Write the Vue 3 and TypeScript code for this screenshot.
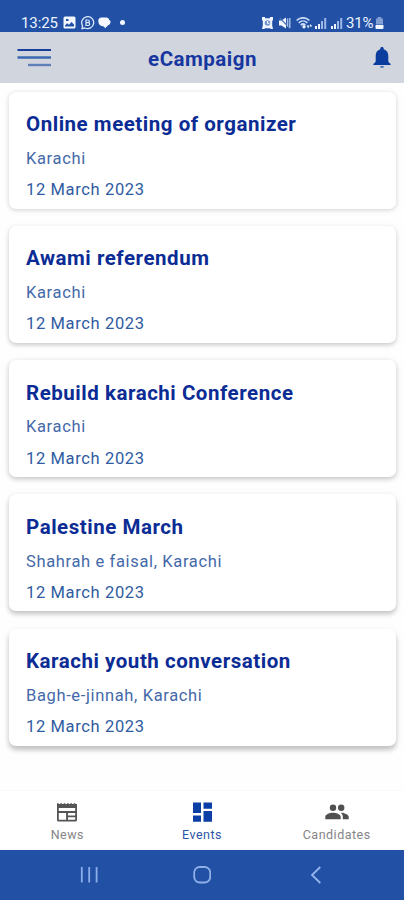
<script setup lang="ts">
interface CampaignEvent {
  title: string
  place: string
  date: string
}

const events: CampaignEvent[] = [
  { title: 'Online meeting of organizer', place: 'Karachi', date: '12 March 2023' },
  { title: 'Awami referendum', place: 'Karachi', date: '12 March 2023' },
  { title: 'Rebuild karachi Conference', place: 'Karachi', date: '12 March 2023' },
  { title: 'Palestine March', place: 'Shahrah e faisal, Karachi', date: '12 March 2023' },
  { title: 'Karachi youth conversation', place: 'Bagh-e-jinnah, Karachi', date: '12 March 2023' },
]
</script>

<template>
  <div class="screen">
    <div class="status">
      <div class="status-left">
        <span class="clock">13:25</span>
        <svg class="s-image" width="13" height="13" viewBox="0 0 13 13">
          <path fill="#f2f6ff" fill-rule="evenodd" d="M2 .5h9A1.5 1.5 0 0 1 12.500 2v9a1.500 1.500 0 0 1-1.500 1.500H2A1.500 1.500 0 0 1 .500 11V2A1.500 1.500 0 0 1 2 .500zM2 10.500h9V8.500L8.500 6 6 8.800 4.200 7.300 2 9.500zM3 3v2h2.500V3z" />
        </svg>
        <svg class="s-chat" width="15" height="14" viewBox="0 0 15 14">
          <path d="M2 12.600l.6-2.800A6 6 0 1 1 5 12z" fill="none" stroke="#dce8ff" stroke-width="1.300" />
          <path d="M6 4h2a1.300 1.300 0 0 1 0 2.700H6zM6 6.700h2.300a1.400 1.400 0 0 1 0 2.800H6z" fill="none" stroke="#dce8ff" stroke-width="1.200" />
        </svg>
        <svg class="s-bubble" width="13" height="12" viewBox="0 0 13 12">
          <path d="M3.500.5h4.800C10 .5 11 1.500 11.200 2.900c1.200.5 1.500 1.500 1.300 2.600-.2 1.500-1.300 2.400-2.700 3L7.200 11.300 5.800 9.500C2.300 9.300.3 7.300.3 4.300A3.500 3.500 0 0 1 3.500.5z" fill="#f5f8ff" />
        </svg>
        <span class="dot"></span>
      </div>
      <div class="status-right">
        <svg width="11" height="12" viewBox="0 0 11 12">
          <path d="M0 0h3v1.200h5V0h3v3.500h-.8v5L11 12H9l-1.200-.8H3.200L2 12H0l.8-3.500v-5H0z" fill="#f0f5ff" />
          <circle cx="5.500" cy="6" r="2.800" fill="#7595cf" />
          <path d="M5.500 4v2.300h1.800" fill="none" stroke="#fff" />
        </svg>
        <svg class="s-mute" width="12" height="12" viewBox="0 0 12 12">
          <path d="M0 3.500h2.500L7 .5v11L2.500 8.500H0z" fill="#f2f6ff" />
          <path d="M.8.800L11 11.500" stroke="#4a72b9" stroke-width="1.200" />
          <path d="M8.600 1.500v8M10.800 1v10" stroke="#a9c1ea" stroke-width="1.400" />
        </svg>
        <svg class="s-wifi" width="17" height="12" viewBox="0 0 17 12">
          <path d="M.6 3.500C4.200-.1 9.800-.1 13.400 3.500M2.700 5.800c2.500-2.400 6.200-2.400 8.700 0M4.700 8.100c1.400-1.300 3.300-1.300 4.700 0" fill="none" stroke="#c9d9f6" stroke-width="1.700" />
          <circle cx="8" cy="9.800" r="1.700" fill="#e8f0ff" />
          <path d="M10.500 8.500l1.800 3 1-3zM13.500 9.500l1-2.500 1.800 2.500z" fill="#e8f0ff" />
        </svg>
        <div class="signals">
          <svg v-for="n in 2" :key="n" width="12" height="12" viewBox="0 0 12 12">
            <path d="M0 9h2v3H0zM3 7h2v5H3z" fill="#edf3ff" />
            <path d="M6 4h2v8H6zM9.200 1h2v11h-2z" fill="#9db8e5" />
          </svg>
        </div>
        <span class="percent">31%</span>
        <svg class="s-batt" width="9" height="12" viewBox="0 0 9 12">
          <path d="M2.700 0h3.600v1.500H8v6H1v-6h1.700z" fill="#829fd4" />
          <path d="M.5 8h8v3a1 1 0 0 1-1 1h-6a1 1 0 0 1-1-1z" fill="#f4f8ff" />
        </svg>
      </div>
    </div>

    <header class="appbar">
      <svg class="menu" width="34" height="20" viewBox="0 0 34 20">
        <path d="M.5 2h33.500" stroke="#163f9c" stroke-width="2.200" />
        <path d="M.5 9.500h33.500" stroke="#3b69b1" stroke-width="2.400" />
        <path d="M11 17h23" stroke="#6080bb" stroke-width="2.400" />
      </svg>
      <h1>eCampaign</h1>
      <svg class="bell" width="18" height="22" viewBox="0 0 18 22">
        <path d="M9 0c1 0 1.700.7 1.700 1.700v.6c3 .8 4.600 3.300 4.600 6.400v6l2.300 2.300V18H.4v-1l2.300-2.300v-6c0-3.100 1.600-5.600 4.600-6.400v-.6C7.300.7 8 0 9 0z" fill="#0b3d9f" />
        <path d="M7 19h4a2 2 0 0 1-4 0z" fill="#4f76b9" />
      </svg>
    </header>

    <main class="list">
      <article v-for="event in events" :key="event.title" class="card">
        <h2>{{ event.title }}</h2>
        <p class="place">{{ event.place }}</p>
        <p class="date">{{ event.date }}</p>
      </article>
    </main>

    <nav class="tabs">
      <div class="tab">
        <svg width="24" height="24" viewBox="0 0 24 24">
          <path d="M2 4v-.8h1.700V4h1.700v-.8H7V4h1.700v-.8h1.600V4H12v-.8h1.700V4h1.600v-.8H17V4h1.700v-.8h1.600V4H22v16a1.500 1.500 0 0 1-1.500 1.500h-17A1.500 1.500 0 0 1 2 20z" fill="#555" />
          <path d="M3.800 8h16.400v3H3.800zM3.800 13h7.300v6.700H3.800zM13 13h7.200v2.600H13zM13 17.200h7.200v2.500H13z" fill="#fff" />
        </svg>
        <span>News</span>
      </div>
      <div class="tab active">
        <svg width="24" height="24" viewBox="0 0 24 24">
          <path d="M3 2.500h8v10.600H3zM13.500 2.500H22v6.300h-8.500zM3 15.500h8v6.300H3zM13.500 11H22v10.800h-8.500z" fill="#0b3fa5" />
        </svg>
        <span>Events</span>
      </div>
      <div class="tab">
        <svg width="24" height="24" viewBox="0 0 24 24">
          <circle cx="8" cy="7.700" r="3.200" fill="#505050" />
          <circle cx="16.200" cy="7.700" r="3.200" fill="#505050" />
          <path d="M.3 19.300v-2.500c0-2.500 4.800-4 7.700-4s7.700 1.500 7.700 4v2.500zM16.200 12.800c2.800.1 7.500 1.600 7.500 4v2.500h-5.900v-2.500c0-1.800-.8-3-2.200-4z" fill="#505050" />
        </svg>
        <span>Candidates</span>
      </div>
    </nav>

    <div class="system">
      <svg width="18" height="18" viewBox="0 0 18 18">
        <path d="M1.800 1v15.500M9.200 1v15.500M16.600 1v15.500" stroke="#8caee8" stroke-width="1.800" />
      </svg>
      <svg width="18" height="18" viewBox="0 0 18 18">
        <rect x="1.200" y="1" width="16" height="15.500" rx="5.500" fill="none" stroke="#8fb0e8" stroke-width="1.800" />
      </svg>
      <svg width="18" height="18" viewBox="0 0 18 18">
        <path d="M13.300 1L5 9l8.300 8" fill="none" stroke="#95b6ec" stroke-width="1.800" />
      </svg>
    </div>
  </div>
</template>

<style>
body {
  margin: 0;
  background: #fff;
}
</style>

<style scoped>
.screen {
  width: 404px;
  height: 900px;
  display: flex;
  flex-direction: column;
  overflow: hidden;
  background: #fefefe;
  font-family: Roboto, "Liberation Sans", sans-serif;
}
svg {
  display: block;
  flex: none;
}
h1,
h2,
p {
  margin: 0;
}
.status {
  height: 32px;
  flex: none;
  box-sizing: border-box;
  padding: 13px 20px 0 21px;
  display: flex;
  justify-content: space-between;
  background: #2150a5;
  color: #edf3ff;
}
.status-left,
.status-right {
  display: flex;
  align-items: center;
  height: 19px;
}
.clock {
  font-size: 15px;
  width: 42px;
  letter-spacing: -0.1px;
}
.s-chat {
  margin-left: 4px;
}
.s-bubble {
  margin-left: 3px;
}
.dot {
  width: 5px;
  height: 5px;
  margin-left: 9px;
  border-radius: 50%;
  background: #f2f7ff;
}
.s-mute {
  margin-left: 6px;
}
.s-wifi {
  margin-left: 5px;
}
.signals {
  display: flex;
  gap: 4px;
  margin-left: 2px;
}
.percent {
  font-size: 15px;
  width: 27px;
  margin-left: 3px;
  letter-spacing: -0.2px;
}
.s-batt {
  margin-left: 2px;
}
.appbar {
  height: 51px;
  flex: none;
  box-sizing: border-box;
  padding: 0 13px 0 17px;
  display: flex;
  align-items: center;
  justify-content: space-between;
  background: #d1d5dd;
}
.appbar h1 {
  font-size: 20.500px;
  line-height: 24px;
  font-weight: 700;
  letter-spacing: 0.500px;
  color: #1637a0;
  margin-right: 19px;
  padding-top: 2px;
}
.list {
  flex: 1;
  padding: 8.500px 8px 0 9px;
  display: flex;
  flex-direction: column;
  gap: 17.300px;
}
.card {
  height: 117px;
  flex: none;
  box-sizing: border-box;
  padding: 20.500px 17px 0;
  border-radius: 7px;
  background: #fff;
}
.card:nth-child(1) {
  box-shadow: 0 1px 4px rgba(0, 0, 0, 0.14), 0 1px 9px rgba(0, 0, 0, 0.05);
}
.card:nth-child(2) {
  box-shadow: 0 2px 4px rgba(0, 0, 0, 0.18), 0 1px 9px rgba(0, 0, 0, 0.05);
}
.card:nth-child(3) {
  box-shadow: 0 2px 5px rgba(0, 0, 0, 0.2), 0 1px 9px rgba(0, 0, 0, 0.05);
}
.card:nth-child(4) {
  box-shadow: 0 3px 5px rgba(0, 0, 0, 0.21), 0 1px 9px rgba(0, 0, 0, 0.05);
}
.card:nth-child(5) {
  box-shadow: 0 4px 5px rgba(0, 0, 0, 0.21), 0 2px 9px rgba(0, 0, 0, 0.06);
}
.card h2 {
  font-size: 20.500px;
  line-height: 24px;
  font-weight: 700;
  letter-spacing: 0.530px;
  color: #0b2c94;
}
.card p {
  font-size: 16.500px;
  line-height: 20px;
  letter-spacing: 0.640px;
}
.card .place {
  margin-top: 12.700px;
  color: #4469a9;
}
.card .date {
  margin-top: 11.500px;
  color: #2f5ba1;
}
.tabs {
  height: 60px;
  flex: none;
  box-sizing: border-box;
  border-top: 1px solid #f9f9f9;
  display: flex;
  background: #fff;
}
.tab {
  flex: 1;
  display: flex;
  flex-direction: column;
  align-items: center;
  padding-top: 9px;
  color: #858585;
  font-size: 12.500px;
  line-height: 16px;
  letter-spacing: 0.500px;
}
.tab span {
  margin-top: 3px;
}
.tab.active {
  color: #2d55a8;
}
.system {
  height: 50px;
  flex: none;
  display: flex;
  align-items: center;
  justify-content: center;
  gap: 95.500px;
  background: #2150a5;
}
</style>
